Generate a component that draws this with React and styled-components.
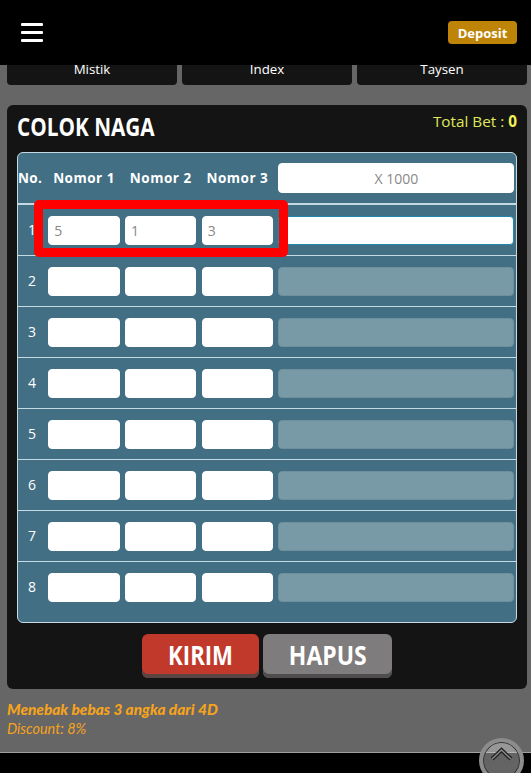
import React from 'react';
import styled, { createGlobalStyle } from 'styled-components';

const GlobalStyle = createGlobalStyle`
  * { box-sizing: border-box; }
  html, body { margin: 0; padding: 0; }
  body {
    background-color: #666;
    font-family: "Open Sans", "Noto Sans", sans-serif;
  }
`;

const Header = styled.header`
  position: fixed;
  top: 0;
  left: 0;
  right: 0;
  z-index: 5;
  height: 65px;
  background-color: #000;
  display: flex;
  align-items: center;
  justify-content: space-between;
  padding: 0 14px 0 21px;
`;

const Burger = styled.button`
  width: 22px;
  height: 19px;
  padding: 0;
  border: none;
  background: none;
  display: flex;
  flex-direction: column;
  justify-content: space-between;

  span {
    display: block;
    height: 3px;
    background-color: #fff;
    border-radius: 1px;
  }
`;

const Deposit = styled.button`
  width: 69px;
  height: 23px;
  border: none;
  border-radius: 4px;
  background-color: #bd8408;
  color: #fff;
  font-family: "Open Sans", sans-serif;
  font-weight: 700;
  font-size: 13px;
  padding: 0;
`;

const Main = styled.main`
  padding: 50px 4px 0 7px;
  height: 773px;
  overflow: hidden;
`;

const Tabs = styled.nav`
  display: grid;
  grid-template-columns: repeat(3, 170px);
  column-gap: 5px;
`;

const Tab = styled.a`
  height: 35px;
  padding-top: 10px;
  background-color: #141414;
  border-radius: 0 0 4px 4px;
  color: #fff;
  font-size: 13.3px;
  line-height: 18px;
  text-align: center;
`;

const Card = styled.section`
  margin-top: 20px;
  height: 584px;
  padding: 0 10px;
  background-color: #141414;
  border-radius: 6px;
`;

const CardHead = styled.div`
  height: 47px;
  display: flex;
  justify-content: space-between;
  align-items: flex-start;
`;

const Title = styled.h1`
  margin: 7px 0 0;
  color: #fff;
  font-family: "Open Sans", sans-serif;
  font-weight: 700;
  font-size: 25px;
  line-height: 28px;
  transform: scaleX(0.83);
  transform-origin: left center;
`;

const TotalBet = styled.div`
  margin-top: 6px;
  color: #dfe85c;
  font-size: 15.3px;
  line-height: 20px;

  b {
    color: #f2f25a;
  }
`;

const BetTable = styled.div`
  height: 471px;
  border: 1px solid #c5dbe4;
  border-radius: 6px;
  background-color: #426f84;
  color: #fff;
`;

const Row = styled.div`
  position: relative;
  height: ${(p) => p.$h}px;
  padding-bottom: ${(p) => p.$pad || 0}px;
  display: grid;
  grid-template-columns: 25.1px 71.5px 71.5px 71.5px 236px;
  column-gap: 5.2px;
  align-items: center;
  border-bottom: ${(p) => p.$line}px solid #c5dbe4;

  &:last-child {
    border-bottom: none;
  }
`;

const HeadCell = styled.div`
  font-weight: 700;
  font-size: 13.5px;
  letter-spacing: 0.5px;
  white-space: nowrap;
  text-align: center;
`;

const NoHead = styled(HeadCell)`
  text-align: left;
  letter-spacing: 0.3px;
`;

const No = styled.div`
  font-size: 14px;
  text-align: center;
  padding: 0 0 2px 3px;
`;

const Field = styled.input`
  width: 100%;
  height: 29px;
  padding: 0 5px;
  border: 1px solid ${(p) => (p.$active ? '#1d87ad' : '#fff')};
  border-radius: 4px;
  background-color: #fff;
  color: #888;
  font-family: "Open Sans", sans-serif;
  font-size: 14px;
  outline: none;

  &:disabled {
    background-color: #789aa7;
    border-color: #6f8f9c;
  }

  &::placeholder {
    color: #888;
  }
`;

const BetHead = styled(Field)`
  height: 30px;
  text-align: center;
`;

const Highlight = styled.div`
  position: absolute;
  left: 16px;
  top: -5px;
  width: 254px;
  height: 57px;
  border: 9px solid #f00;
  border-radius: 5px;
  pointer-events: none;
`;

const Actions = styled.div`
  margin-top: 11px;
  display: flex;
  justify-content: center;
  gap: 4px;
`;

const ActionButton = styled.button`
  width: ${(p) => p.$w}px;
  height: 44px;
  padding: 0 0 4px;
  border: none;
  border-radius: 6px;
  background-color: ${(p) => p.$bg};
  box-shadow: inset 0 -4px 0 ${(p) => p.$edge};
  color: #fff;
  font-family: "Open Sans", sans-serif;
  font-weight: 700;
  font-size: 27px;

  span {
    display: inline-block;
    transform: scaleX(${(p) => p.$squeeze});
  }
`;

const Notes = styled.div`
  margin-top: 11px;
  color: #f5a31c;
  font-family: Lato, sans-serif;
  font-style: italic;
  font-size: 14.4px;
  line-height: 19px;

  strong {
    display: block;
    font-size: 15.4px;
    font-weight: 900;
  }
`;

const Footer = styled.footer`
  position: fixed;
  left: 0;
  right: 0;
  bottom: 0;
  height: 21px;
  background-color: #000;
  border-top: 1px solid #a0a0a0;
`;

const ScrollTop = styled.button`
  position: fixed;
  left: 479px;
  top: 738px;
  z-index: 6;
  width: 45px;
  height: 45px;
  padding: 0 0 12px;
  border: 4px solid #8c8c8c;
  border-radius: 50%;
  background-color: rgba(200, 200, 200, 0.5);
  box-shadow: inset 0 0 0 1px #333;
`;

const rows = [2, 3, 4, 5, 6, 7, 8];

function App() {
  return (
    <>
      <GlobalStyle />
      <Header>
        <Burger aria-label="Menu">
          <span />
          <span />
          <span />
        </Burger>
        <Deposit>Deposit</Deposit>
      </Header>
      <Main>
        <Tabs>
          <Tab>Mistik</Tab>
          <Tab>Index</Tab>
          <Tab>Taysen</Tab>
        </Tabs>
        <Card>
          <CardHead>
            <Title>COLOK NAGA</Title>
            <TotalBet>
              Total Bet : <b>0</b>
            </TotalBet>
          </CardHead>
          <BetTable>
            <Row $h={52} $line={2}>
              <NoHead>No.</NoHead>
              <HeadCell>Nomor 1</HeadCell>
              <HeadCell>Nomor 2</HeadCell>
              <HeadCell>Nomor 3</HeadCell>
              <BetHead placeholder="X 1000" readOnly />
            </Row>
            <Row $h={51} $line={1}>
              <No>1</No>
              <Field defaultValue="5" />
              <Field defaultValue="1" />
              <Field defaultValue="3" />
              <Field $active />
              <Highlight />
            </Row>
            {rows.map((n) => (
              <Row key={n} $h={n === 8 ? 61 : 51} $pad={n === 8 ? 10 : 0} $line={1}>
                <No>{n}</No>
                <Field />
                <Field />
                <Field />
                <Field disabled />
              </Row>
            ))}
          </BetTable>
          <Actions>
            <ActionButton $w={117} $bg="#c0392b" $edge="#5a4543" $squeeze={0.82}>
              <span>KIRIM</span>
            </ActionButton>
            <ActionButton $w={129} $bg="#7f7c7d" $edge="#4f4d4e" $squeeze={0.85}>
              <span>HAPUS</span>
            </ActionButton>
          </Actions>
        </Card>
        <Notes>
          <strong>Menebak bebas 3 angka dari 4D</strong>
          Discount: 8%
        </Notes>
      </Main>
      <Footer />
      <ScrollTop aria-label="Ke atas">
        <svg width="25" height="15" viewBox="0 0 25 15" fill="none">
          <path d="M3 13 L12.5 4 L22 13" stroke="#222" strokeWidth="4" />
          <path d="M3 13 L12.5 4 L22 13" stroke="#8a8a8a" strokeWidth="1.5" />
        </svg>
      </ScrollTop>
    </>
  );
}

export default App;
